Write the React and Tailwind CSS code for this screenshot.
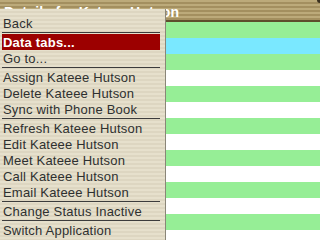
const ROWS = 14

const MENU = [
  { label: 'Back' },
  { sep: true },
  { label: 'Data tabs...', active: true },
  { label: 'Go to...' },
  { sep: true },
  { label: 'Assign Kateee Hutson' },
  { label: 'Delete Kateee Hutson' },
  { label: 'Sync with Phone Book' },
  { sep: true },
  { label: 'Refresh Kateee Hutson' },
  { label: 'Edit Kateee Hutson' },
  { label: 'Meet Kateee Hutson' },
  { label: 'Call Kateee Hutson' },
  { label: 'Email Kateee Hutson' },
  { sep: true },
  { label: 'Change Status Inactive' },
  { sep: true },
  { label: 'Switch Application' },
]

function Row({ i }) {
  const bg = i === 1 ? 'bg-[#7ae8ff]' : i % 2 === 0 ? 'bg-[#96ee96]' : 'bg-white'
  return <div className={`h-4 ${bg}`} />
}

export default function App() {
  return (
    <div className="relative w-[320px] h-[240px] overflow-hidden bg-white font-['Liberation_Sans',sans-serif]">
      {/* title bar */}
      <div className="h-[22px] border-b-2 border-[#5e4e2c] bg-[repeating-linear-gradient(180deg,#bcaa7a_0px,#bcaa7a_2px,#a38f5f_2px,#a38f5f_4px)] flex items-center px-1">
        <span className="text-white font-bold text-[14px] leading-none pt-[3px] tracking-[0.2px]">Details for Kateee Hutson</span>
        <div className="absolute right-0 top-0 w-[3px] h-[3px] rounded-bl-full bg-[#3a3020]" />
      </div>
      <div>
        {Array.from({ length: ROWS }).map((_, i) => <Row key={i} i={i} />)}
      </div>

      {/* menu */}
      <div className="absolute left-0 top-[9px] w-[166px] h-[240px] pt-[6px] border-r-[1px] border-[#8a8678] bg-[repeating-linear-gradient(180deg,#e6e0cc_0px,#e6e0cc_2px,#ddd6c1_2px,#ddd6c1_4px)]">
        {MENU.map((m, i) =>
          m.sep ? (
            <div key={i} className="h-[3px] px-[2px] pt-[1px]">
              <div className="h-px w-[158px] bg-[#3c3c3c]" />
            </div>
          ) : (
            <div key={i} className="h-4 pl-[2px]">
              <div
                className={`h-4 w-[158px] pl-[1px] pt-[1px] flex items-center text-[13px] leading-none tracking-[0.2px] ${
                  m.active ? 'bg-[#9c0000] text-white font-bold' : 'text-[#2e3030]'
                }`}
              >
                {m.label}
              </div>
            </div>
          )
        )}
      </div>
    </div>
  )
}
